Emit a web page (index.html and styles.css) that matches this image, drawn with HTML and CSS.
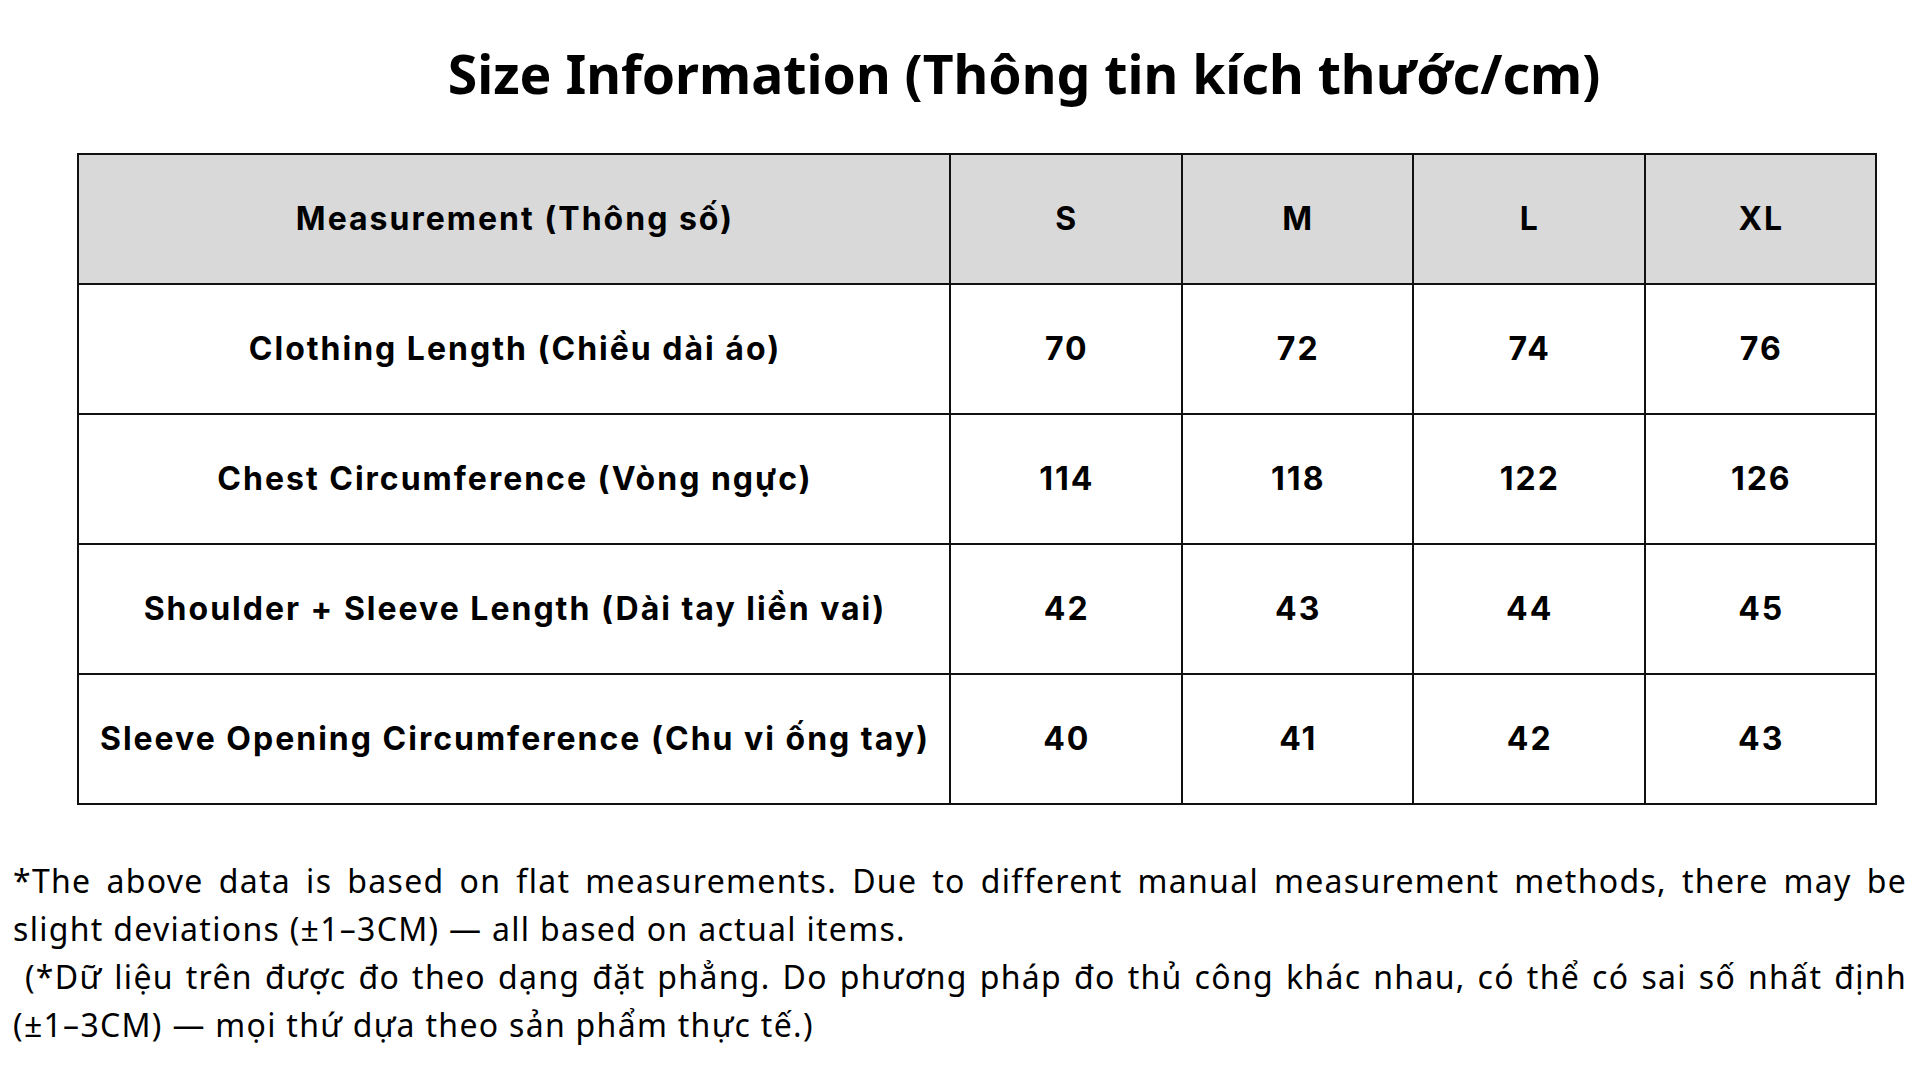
FILE: index.html
```html
<!DOCTYPE html>
<html lang="vi">
<head>
<meta charset="utf-8">
<title>Size Information</title>
<link rel="stylesheet" href="styles.css">
</head>
<body>
<main class="page">
  <h1 class="title">Size Information (Thông tin kích thước/cm)</h1>
  <table class="size-table">
    <colgroup>
      <col class="col-name">
      <col class="col-size">
      <col class="col-size">
      <col class="col-size">
      <col class="col-size">
    </colgroup>
    <thead>
      <tr>
        <th>Measurement (Thông số)</th>
        <th>S</th>
        <th>M</th>
        <th>L</th>
        <th>XL</th>
      </tr>
    </thead>
    <tbody>
      <tr>
        <td>Clothing Length (Chiều dài áo)</td>
        <td>70</td><td>72</td><td>74</td><td>76</td>
      </tr>
      <tr>
        <td>Chest Circumference (Vòng ngực)</td>
        <td>114</td><td>118</td><td>122</td><td>126</td>
      </tr>
      <tr>
        <td>Shoulder + Sleeve Length (Dài tay liền vai)</td>
        <td>42</td><td>43</td><td>44</td><td>45</td>
      </tr>
      <tr>
        <td>Sleeve Opening Circumference (Chu vi ống tay)</td>
        <td>40</td><td>41</td><td>42</td><td>43</td>
      </tr>
    </tbody>
  </table>
  <p class="note">*The above data is based on flat measurements. Due to different manual measurement methods, there may be slight deviations (±1–3CM) — all based on actual items.<br>&nbsp;(*Dữ liệu trên được đo theo dạng đặt phẳng. Do phương pháp đo thủ công khác nhau, có thể có sai số nhất định (±1–3CM) — mọi thứ dựa theo sản phẩm thực tế.)</p>
</main>
</body>
</html>
```
FILE: styles.css
```css
html, body {
  margin: 0;
  padding: 0;
  background: #ffffff;
}

body {
  font-family: "Noto Sans", "Open Sans", sans-serif;
  color: #000000;
}

.page {
  width: 1894px;
  padding: 37px 13px 0 13px;
  display: flex;
  flex-direction: column;
}

.title {
  margin: 0;
  padding-left: 128px;
  text-align: center;
  font-family: "Noto Sans", sans-serif;
  font-weight: 700;
  font-size: 53.5px;
  line-height: 74px;
  color: #000;
}

.size-table {
  margin: 42px 0 0 64px;
  width: 1798px;
  border-collapse: collapse;
  table-layout: fixed;
  font-family: "Inter", "Noto Sans", sans-serif;
  font-weight: 700;
  font-size: 32px;
  letter-spacing: 2px;
  color: #000;
}

.col-name { width: 872px; }
.col-size { width: 231.5px; }

.size-table th,
.size-table td {
  height: 126px;
  padding: 0 0 2px 2px;
  border: 2px solid #111;
  text-align: center;
  vertical-align: middle;
  font-weight: 700;
}

.size-table thead th {
  background: #d9d9d9;
}

.note {
  margin: 52px 0 0 0;
  font-family: "Noto Sans", sans-serif;
  font-size: 32px;
  line-height: 1.5;
  letter-spacing: 1.3px;
  text-align: justify;
  color: #000;
}
```
